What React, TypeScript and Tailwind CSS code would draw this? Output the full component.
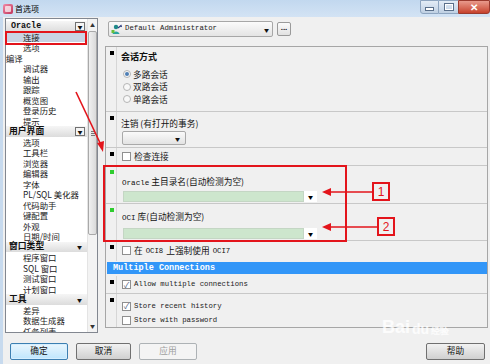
import React from 'react';

type Row = { t: string; kind: 'h' | 'i' | 'top'; btn?: 'box' | 'arrow'; sel?: boolean; mono?: boolean };

const rows: Row[] = [
  { t: 'Oracle', kind: 'h', btn: 'box', mono: true },
  { t: '连接', kind: 'i', sel: true },
  { t: '选项', kind: 'i' },
  { t: '编译', kind: 'top' },
  { t: '调试器', kind: 'i' },
  { t: '输出', kind: 'i' },
  { t: '跟踪', kind: 'i' },
  { t: '概览图', kind: 'i' },
  { t: '登录历史', kind: 'i' },
  { t: '提示', kind: 'i' },
  { t: '用户界面', kind: 'h', btn: 'box' },
  { t: '选项', kind: 'i' },
  { t: '工具栏', kind: 'i' },
  { t: '浏览器', kind: 'i' },
  { t: '编辑器', kind: 'i' },
  { t: '字体', kind: 'i' },
  { t: 'PL/SQL 美化器', kind: 'i' },
  { t: '代码助手', kind: 'i' },
  { t: '键配置', kind: 'i' },
  { t: '外观', kind: 'i' },
  { t: '日期/时间', kind: 'i' },
  { t: '窗口类型', kind: 'h', btn: 'arrow' },
  { t: '程序窗口', kind: 'i' },
  { t: 'SQL 窗口', kind: 'i' },
  { t: '测试窗口', kind: 'i' },
  { t: '计划窗口', kind: 'i' },
  { t: '工具', kind: 'h', btn: 'arrow' },
  { t: '差异', kind: 'i' },
  { t: '数据生成器', kind: 'i' },
  { t: '任务列表', kind: 'i' },
];

const Marker = ({ green }: { green?: boolean }) => (
  <div className="w-[11px] shrink-0 border-r border-[#d6d6d6] pl-[4px] pt-[4px]">
    <div className={green ? 'h-[4px] w-[4px] bg-[#2ecc2e]' : 'h-[4px] w-[4px] bg-black'} />
  </div>
);

const Check = ({ on, label, mono }: { on?: boolean; label: string; mono?: boolean }) => (
  <div className="flex items-center gap-[3px] pl-[5px]">
    <div className="flex h-[9px] w-[9px] items-center justify-center border border-[#8f8f8f] bg-white text-[8px] leading-none text-[#4a5a7a]">
      {on ? '✓' : ''}
    </div>
    <span className={mono ? "font-['Liberation_Mono',monospace] text-[7.3px] text-[#222]" : 'text-[8.7px] text-[#222]'}>{label}</span>
  </div>
);

const Radio = ({ on, label }: { on?: boolean; label: string }) => (
  <div className="flex h-[12.5px] items-center gap-[2px] pl-[6px]">
    <div className="flex h-[8px] w-[8px] items-center justify-center rounded-full border border-[#b5b5b5] bg-[#f8f8f8]">
      {on && <div className="h-[4px] w-[4px] rounded-full bg-[#4f7fb5]" />}
    </div>
    <span className="text-[8.7px] text-[#222]">{label}</span>
  </div>
);

const GreenCombo = () => (
  <div className="ml-[6px] flex h-[11px] w-[194px]">
    <div className="flex-1 border border-[#c4d6c4] bg-[#cde6cd]" />
    <div className="flex w-[13px] items-center justify-center bg-white text-[5px] leading-none text-black">▼</div>
  </div>
);

export default function App() {
  return (
    <div className="relative h-[364px] w-[490px] overflow-hidden bg-[#f0f0f0] font-['Noto_Sans_CJK_SC','Noto_Sans',sans-serif] text-[#111]">
      {/* title bar */}
      <div className="flex h-[17px] items-center bg-gradient-to-b from-[#c2d8ef] to-[#d3e3f4] pl-[3px]">
        <div className="h-[10px] w-[10px] rounded-[2px] bg-gradient-to-br from-[#f08aa8] to-[#c0305a] p-[2px]">
          <div className="h-full w-full rounded-[1px] bg-white/70" />
        </div>
        <span className="ml-[2px] text-[8px] leading-none text-black">首选项</span>
        <div className="ml-auto flex h-[14px] self-start">
          <div className="flex w-[19px] items-center justify-center rounded-bl-[3px] border border-[#8ea5c0] bg-gradient-to-b from-[#e3ecf6] to-[#bfd0e3]">
            <div className="mt-[4px] h-[2px] w-[7px] bg-white shadow-[0_0_0_1px_#5a6f8a]" />
          </div>
          <div className="flex w-[19px] items-center justify-center border-y border-[#8ea5c0] bg-gradient-to-b from-[#e3ecf6] to-[#bfd0e3]">
            <div className="h-[6px] w-[8px] border border-white shadow-[0_0_0_1px_#5a6f8a]" />
          </div>
          <div className="flex w-[32px] items-center justify-center rounded-br-[3px] border border-[#9a3a2e] bg-gradient-to-b from-[#e89a8c] to-[#c6402c] text-[10px] font-bold leading-none text-white">
            ✕
          </div>
        </div>
      </div>

      {/* main */}
      <div className="flex h-[316px] border-l-[3px] border-[#c7daee] pl-[2px] pt-[1px]">
        {/* tree */}
        <div className="flex h-[315px] w-[93px] border border-[#828790] bg-white">
          <div className="flex w-[82px] flex-col overflow-hidden pt-[2px]">
            {rows.map((r, i) => {
              if (r.kind === 'h')
                return (
                  <div key={i} className="flex h-[10.5px] shrink-0 items-center bg-gradient-to-b from-[#f6f6f6] to-[#dcdcdc] pl-[3px] pr-[2px]">
                    <span className={r.mono ? "pl-[2px] font-['Liberation_Mono',monospace] text-[8.4px] font-bold leading-none" : 'text-[8.8px] font-bold leading-none'}>{r.t}</span>
                    {r.btn === 'box' ? (
                      <div className="ml-auto flex h-[9px] w-[10px] items-center justify-center border border-[#707070] bg-[#f4f4f4] text-[5px] leading-none">▼</div>
                    ) : (
                      <div className="ml-auto pr-[3px] text-[5px] leading-none">▼</div>
                    )}
                  </div>
                );
              return (
                <div
                  key={i}
                  className={
                    r.sel
                      ? 'flex h-[10.5px] shrink-0 items-center bg-[#c9d3e3] pl-[17px]'
                      : r.kind === 'top'
                        ? 'flex h-[10.5px] shrink-0 items-center pl-[0px]'
                        : 'flex h-[10.5px] shrink-0 items-center pl-[17px]'
                  }
                >
                  <span className="whitespace-nowrap text-[8.4px] leading-none text-[#1a1a1a]">{r.t}</span>
                </div>
              );
            })}
          </div>
          {/* scrollbar */}
          <div className="flex w-[10px] flex-col items-center border-l border-[#e4e4e4] bg-[#f3f3f3]">
            <div className="pt-[3px] text-[5px] leading-none text-[#333]">▲</div>
            <div className="mt-[4px] flex h-[204px] w-[9px] items-center justify-center rounded-[2px] border border-[#a9a9a9] bg-gradient-to-r from-[#f0f0f0] to-[#dadada]">
              <div className="flex flex-col gap-[1px]">
                <div className="h-px w-[4px] bg-[#777]" />
                <div className="h-px w-[4px] bg-[#777]" />
                <div className="h-px w-[4px] bg-[#777]" />
              </div>
            </div>
            <div className="mt-auto pb-[4px] text-[5px] leading-none text-[#333]">▼</div>
          </div>
        </div>

        {/* right */}
        <div className="ml-[7px] flex w-[383px] flex-col">
          <div className="mt-[3px] flex items-center">
            <div className="ml-[3px] flex h-[16px] w-[165px] items-center rounded-[2px] border border-[#a7a7a7] bg-gradient-to-b from-[#fbfbfb] to-[#e4e4e4] pl-[2px] pr-[3px]">
              <svg width="11" height="11" viewBox="0 0 11 11">
                <circle cx="5" cy="3" r="2.2" fill="#1f8a8a" />
                <path d="M1.5 10 C2 6.5 8 6.5 8.5 10 Z" fill="#2aa5a0" />
                <path d="M7 4 L10 1.5 L10.5 3" stroke="#2d3d80" strokeWidth="1.2" fill="none" />
                <rect x="0.5" y="6" width="3" height="3" fill="#6bbf3a" />
              </svg>
              <span className="ml-[3px] font-['Liberation_Mono',monospace] text-[7.3px] leading-none text-[#222]">Default Administrator</span>
              <span className="ml-auto text-[5px] leading-none">▼</span>
            </div>
            <div className="ml-[4px] flex h-[14px] w-[14px] items-center justify-center rounded-[2px] border border-[#9a9a9a] bg-gradient-to-b from-[#fbfbfb] to-[#e2e2e2] pb-[3px] font-['Liberation_Sans',sans-serif] text-[8px] font-bold leading-none">...</div>
          </div>

          {/* options panel */}
          <div className="mt-[9px] flex h-[282px] flex-col border border-[#a6a6a6] bg-[#f0f0f0]">
            <div className="flex h-[65px] shrink-0 border-b border-[#c8c8c8]">
              <Marker />
              <div className="flex flex-col pt-[5px]">
                <div className="pl-[4px] text-[9px] font-bold leading-[10px]">会话方式</div>
                <div className="mt-[6px] flex flex-col">
                  <Radio on label="多路会话" />
                  <Radio label="双路会话" />
                  <Radio label="单路会话" />
                </div>
              </div>
            </div>
            <div className="flex h-[36px] shrink-0 border-b border-[#c8c8c8]">
              <Marker />
              <div className="flex flex-col pt-[7px]">
                <div className="pl-[4px] text-[8.7px] leading-[10px]">注销 (有打开的事务)</div>
                <div className="ml-[5px] mt-[2px] flex h-[14px] w-[64px] items-center justify-end rounded-[2px] border border-[#a9a9a9] bg-gradient-to-b from-[#fafafa] to-[#e3e3e3] pr-[5px] text-[5px] leading-none">▼</div>
              </div>
            </div>
            <div className="flex h-[18px] shrink-0 border-b border-[#c8c8c8]">
              <Marker />
              <div className="flex items-center">
                <Check label="检查连接" />
              </div>
            </div>
            <div className="flex h-[38px] shrink-0 border-b border-[#c8c8c8]">
              <Marker green />
              <div className="flex flex-col pt-[7px]">
                <div className="pl-[5px] leading-[10px]">
                  <span className="font-['Liberation_Mono',monospace] text-[7.6px]">Oracle</span>
                  <span className="text-[8.7px]"> 主目录名(自动检测为空)</span>
                </div>
                <div className="mt-[3px]">
                  <GreenCombo />
                </div>
              </div>
            </div>
            <div className="flex h-[37px] shrink-0 border-b border-[#c8c8c8]">
              <Marker green />
              <div className="flex flex-col pt-[4px]">
                <div className="pl-[5px] leading-[10px]">
                  <span className="font-['Liberation_Mono',monospace] text-[7.6px]">OCI</span>
                  <span className="text-[8.7px]"> 库(自动检测为空)</span>
                </div>
                <div className="mt-[5px]">
                  <GreenCombo />
                </div>
              </div>
            </div>
            <div className="flex h-[20px] shrink-0">
              <Marker />
              <div className="flex items-center">
                <div className="flex items-center gap-[3px] pl-[5px]">
                  <div className="h-[9px] w-[9px] border border-[#8f8f8f] bg-white" />
                  <span className="text-[8.7px]">在 </span>
                  <span className="font-['Liberation_Mono',monospace] text-[7.3px]">OCI8</span>
                  <span className="text-[8.7px]"> 上强制使用 </span>
                  <span className="font-['Liberation_Mono',monospace] text-[7.3px]">OCI7</span>
                </div>
              </div>
            </div>
            <div className="h-[15px] shrink-0 pt-[1px]">
              <div className="ml-[1px] flex h-[12px] items-center bg-[#3296f8] pl-[6px]">
                <span className="font-['Liberation_Mono',monospace] text-[8.5px] font-bold leading-none text-white">Multiple Connections</span>
              </div>
            </div>
            <div className="flex h-[18px] shrink-0 border-b border-[#c8c8c8]">
              <Marker />
              <div className="flex items-center">
                <Check on mono label="Allow multiple connections" />
              </div>
            </div>
            <div className="flex flex-1">
              <Marker />
              <div className="flex flex-col pt-[5px]">
                <div className="flex h-[14px] items-center">
                  <Check on mono label="Store recent history" />
                </div>
                <div className="flex h-[14px] items-center">
                  <Check mono label="Store with password" />
                </div>
              </div>
            </div>
          </div>
        </div>
      </div>

      {/* buttons */}
      <div className="flex h-[31px] items-start border-l-[3px] border-[#c7daee] pt-[10px]">
        <button className="ml-[7px] h-[17px] w-[58px] rounded-[2px] border border-[#3c7fb1] bg-gradient-to-b from-[#eaf6fd] to-[#bee6fd] text-[8.7px] leading-none shadow-[inset_0_0_0_1px_#d6efff]">确定</button>
        <button className="ml-[8px] h-[17px] w-[55px] rounded-[2px] border border-[#707070] bg-gradient-to-b from-[#f2f2f2] to-[#d0d0d0] text-[8.7px] leading-none">取消</button>
        <button className="ml-[8px] h-[17px] w-[58px] rounded-[2px] border border-[#adb2b5] bg-[#f4f4f4] text-[8.7px] leading-none text-[#a0a0a0]">应用</button>
        <button className="ml-auto mr-[5px] h-[17px] w-[59px] rounded-[2px] border border-[#707070] bg-gradient-to-b from-[#f2f2f2] to-[#d0d0d0] text-[8.7px] leading-none">帮助</button>
      </div>

      {/* baidu watermark */}
      <div className="pointer-events-none absolute left-[382px] top-[318px] flex items-end font-['Liberation_Sans',sans-serif] text-[18px] font-bold leading-none text-white/80">
        <span>Bai</span>
        <span className="ml-[2px] text-[14px]">du</span>
        <span className="ml-[2px] text-[9px]">经验</span>
      </div>

      {/* annotations */}
      <div className="pointer-events-none absolute left-[5px] top-[31px] h-[14px] w-[82px] border-2 border-[#e3141b]" />
      <div className="pointer-events-none absolute left-[103px] top-[165px] h-[77px] w-[244px] border-2 border-[#e3141b]" />
      <div className="pointer-events-none absolute left-[372px] top-[182px] flex h-[19px] w-[18px] items-center justify-center border-2 border-[#e3141b] font-['Liberation_Sans',sans-serif] text-[12px] leading-none text-[#e3141b]">1</div>
      <div className="pointer-events-none absolute left-[377px] top-[217px] flex h-[19px] w-[18px] items-center justify-center border-2 border-[#e3141b] font-['Liberation_Sans',sans-serif] text-[12px] leading-none text-[#e3141b]">2</div>
      <svg className="pointer-events-none absolute left-0 top-0" width="490" height="364" viewBox="0 0 490 364">
        <line x1="76" y1="92" x2="101" y2="145" stroke="#e3141b" strokeWidth="1.6" />
        <polygon points="103,152 97,143 104,141" fill="#e3141b" />
        <line x1="330" y1="192" x2="372" y2="192" stroke="#e3141b" strokeWidth="1.6" />
        <polygon points="322,192 331,188 331,196" fill="#e3141b" />
        <line x1="330" y1="227" x2="377" y2="227" stroke="#e3141b" strokeWidth="1.6" />
        <polygon points="322,227 331,223 331,231" fill="#e3141b" />
      </svg>
    </div>
  );
}
